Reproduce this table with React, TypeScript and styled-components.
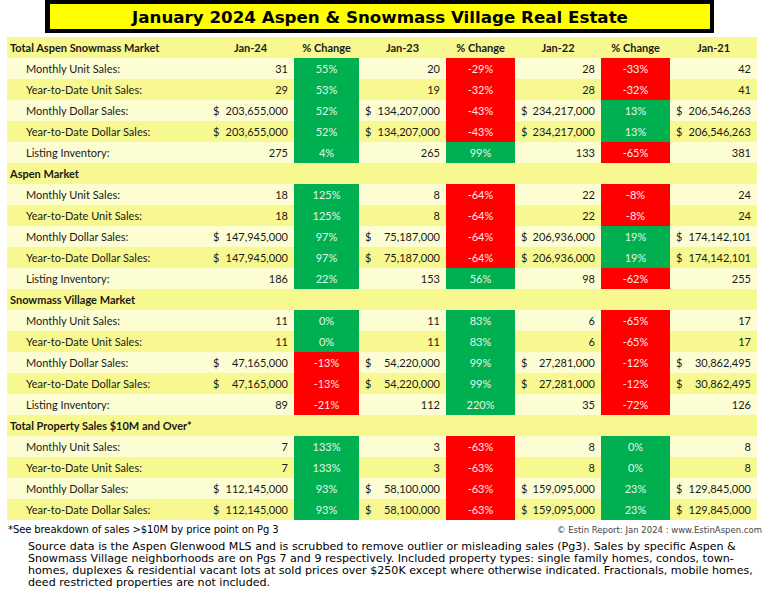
import React from "react";
import styled, { createGlobalStyle } from "styled-components";

const Global = createGlobalStyle`
  html, body { margin: 0; padding: 0; background: #fff; }
  body { font-family: Lato, "Liberation Sans", sans-serif; }
`;

const Page = styled.div`
  width: 767px;
  height: 605px;
  display: flex;
  flex-direction: column;
  background: #fff;
  overflow: hidden;
`;

const TitleBox = styled.div`
  margin-left: 45px;
  width: 660px;
  height: 25px;
  border-style: solid;
  border-color: #000;
  border-width: 4px 4px 4px 5px;
  background: #ffff00;
  display: flex;
  align-items: center;
  justify-content: center;
  font-family: "DejaVu Sans", Verdana, sans-serif;
  font-weight: bold;
  font-size: 16.7px;
  color: #000;
`;

const Table = styled.div`
  margin: 4px 0 0 7px;
  width: 750px;
  display: grid;
  grid-template-columns: 200px 87px 65px 87px 69px 86px 69px 87px;
  grid-auto-rows: 21px;
  font-family: Lato, "Liberation Sans", sans-serif;
  font-size: 11px;
  color: #1a1a1a;
`;

const Row = styled.div<{ $dark: boolean }>`
  display: contents;
  --bg: ${(p) => (p.$dark ? "#f8f891" : "#fdfdd3")};
`;

const Cell = styled.div<{ $align?: "left" | "right" | "center" }>`
  background: var(--bg);
  display: flex;
  align-items: center;
  justify-content: ${(p) =>
    p.$align === "right" ? "flex-end" : p.$align === "center" ? "center" : "flex-start"};
  padding: 0 6px;
  white-space: nowrap;
`;

const HeadCell = styled(Cell)`
  font-weight: bold;
  justify-content: center;
`;

const SectionLabel = styled(Cell)`
  font-weight: bold;
  padding-left: 3px;
`;

const Label = styled(Cell)`
  padding-left: 19px;
`;

const Money = styled(Cell)`
  justify-content: space-between;
`;

const Pct = styled.div<{ $up: boolean }>`
  background: ${(p) => (p.$up ? "#00b050" : "#ff0000")};
  color: ${(p) => (p.$up ? "#e8f5e8" : "#ffe8e8")};
  display: flex;
  align-items: center;
  justify-content: center;
  white-space: nowrap;
`;

const FootRow = styled.div`
  display: flex;
  justify-content: space-between;
  align-items: baseline;
  padding: 4px 5px 0 8px;
`;

const FootNote = styled.div`
  font-family: "DejaVu Sans", Tahoma, sans-serif;
  font-size: 10px;
  color: #000;
  letter-spacing: -0.1px;
`;

const Copy = styled.div`
  font-family: "DejaVu Sans", Verdana, sans-serif;
  font-size: 8.5px;
  color: #444;
`;

const Source = styled.div`
  margin: 6px 0 0 28px;
  font-family: "DejaVu Sans", Verdana, sans-serif;
  font-size: 11.1px;
  line-height: 12px;
  color: #000;
  white-space: nowrap;
`;

type Val = string;
type DataRow = [string, Val, number, Val, number, Val, number, Val];

const sections: { title: string; rows: DataRow[] }[] = [
  {
    title: "Total Aspen Snowmass Market",
    rows: [
      ["Monthly Unit Sales:", "31", 55, "20", -29, "28", -33, "42"],
      ["Year-to-Date Unit Sales:", "29", 53, "19", -32, "28", -32, "41"],
      ["Monthly Dollar Sales:", "$203,655,000", 52, "$134,207,000", -43, "$234,217,000", 13, "$206,546,263"],
      ["Year-to-Date Dollar Sales:", "$203,655,000", 52, "$134,207,000", -43, "$234,217,000", 13, "$206,546,263"],
      ["Listing Inventory:", "275", 4, "265", 99, "133", -65, "381"],
    ],
  },
  {
    title: "Aspen Market",
    rows: [
      ["Monthly Unit Sales:", "18", 125, "8", -64, "22", -8, "24"],
      ["Year-to-Date Unit Sales:", "18", 125, "8", -64, "22", -8, "24"],
      ["Monthly Dollar Sales:", "$147,945,000", 97, "$75,187,000", -64, "$206,936,000", 19, "$174,142,101"],
      ["Year-to-Date Dollar Sales:", "$147,945,000", 97, "$75,187,000", -64, "$206,936,000", 19, "$174,142,101"],
      ["Listing Inventory:", "186", 22, "153", 56, "98", -62, "255"],
    ],
  },
  {
    title: "Snowmass Village Market",
    rows: [
      ["Monthly Unit Sales:", "11", 0, "11", 83, "6", -65, "17"],
      ["Year-to-Date Unit Sales:", "11", 0, "11", 83, "6", -65, "17"],
      ["Monthly Dollar Sales:", "$47,165,000", -13, "$54,220,000", 99, "$27,281,000", -12, "$30,862,495"],
      ["Year-to-Date Dollar Sales:", "$47,165,000", -13, "$54,220,000", 99, "$27,281,000", -12, "$30,862,495"],
      ["Listing Inventory:", "89", -21, "112", 220, "35", -72, "126"],
    ],
  },
  {
    title: "Total Property Sales $10M and Over*",
    rows: [
      ["Monthly Unit Sales:", "7", 133, "3", -63, "8", 0, "8"],
      ["Year-to-Date Unit Sales:", "7", 133, "3", -63, "8", 0, "8"],
      ["Monthly Dollar Sales:", "$112,145,000", 93, "$58,100,000", -63, "$159,095,000", 23, "$129,845,000"],
      ["Year-to-Date Dollar Sales:", "$112,145,000", 93, "$58,100,000", -63, "$159,095,000", 23, "$129,845,000"],
    ],
  },
];

const heads = ["Jan-24", "% Change", "Jan-23", "% Change", "Jan-22", "% Change", "Jan-21"];

function ValueCell({ v }: { v: string }) {
  if (v.startsWith("$")) {
    return (
      <Money>
        <span>$</span>
        <span>{v.slice(1)}</span>
      </Money>
    );
  }
  return <Cell $align="right">{v}</Cell>;
}

function PctCell({ n }: { n: number }) {
  return <Pct $up={n >= 0}>{n}%</Pct>;
}

export default function App() {
  let idx = 0;
  const rows: React.ReactNode[] = [];
  sections.forEach((s, si) => {
    const dark = idx % 2 === 0;
    idx++;
    rows.push(
      <Row key={`s${si}`} $dark={dark}>
        <SectionLabel>{s.title}</SectionLabel>
        {si === 0
          ? heads.map((h, i) => <HeadCell key={i}>{h}</HeadCell>)
          : heads.map((_, i) => <Cell key={i} />)}
      </Row>
    );
    s.rows.forEach((r, ri) => {
      const d = idx % 2 === 0;
      idx++;
      rows.push(
        <Row key={`r${si}-${ri}`} $dark={d}>
          <Label>{r[0]}</Label>
          <ValueCell v={r[1]} />
          <PctCell n={r[2]} />
          <ValueCell v={r[3]} />
          <PctCell n={r[4]} />
          <ValueCell v={r[5]} />
          <PctCell n={r[6]} />
          <ValueCell v={r[7]} />
        </Row>
      );
    });
  });

  return (
    <>
      <Global />
      <Page>
        <TitleBox>January 2024 Aspen &amp; Snowmass Village Real Estate</TitleBox>
        <Table>{rows}</Table>
        <FootRow>
          <FootNote>*See breakdown of sales &gt;$10M by price point on Pg 3</FootNote>
          <Copy>© Estin Report: Jan 2024 : www.EstinAspen.com</Copy>
        </FootRow>
        <Source>
          Source data is the Aspen Glenwood MLS and is scrubbed to remove outlier or misleading sales (Pg3). Sales by specific Aspen &amp;
          <br />
          Snowmass Village neighborhoods are on Pgs 7 and 9 respectively. Included property types: single family homes, condos, town-
          <br />
          homes, duplexes &amp; residential vacant lots at sold prices over $250K except where otherwise indicated. Fractionals, mobile homes,
          <br />
          deed restricted properties are not included.
        </Source>
      </Page>
    </>
  );
}
